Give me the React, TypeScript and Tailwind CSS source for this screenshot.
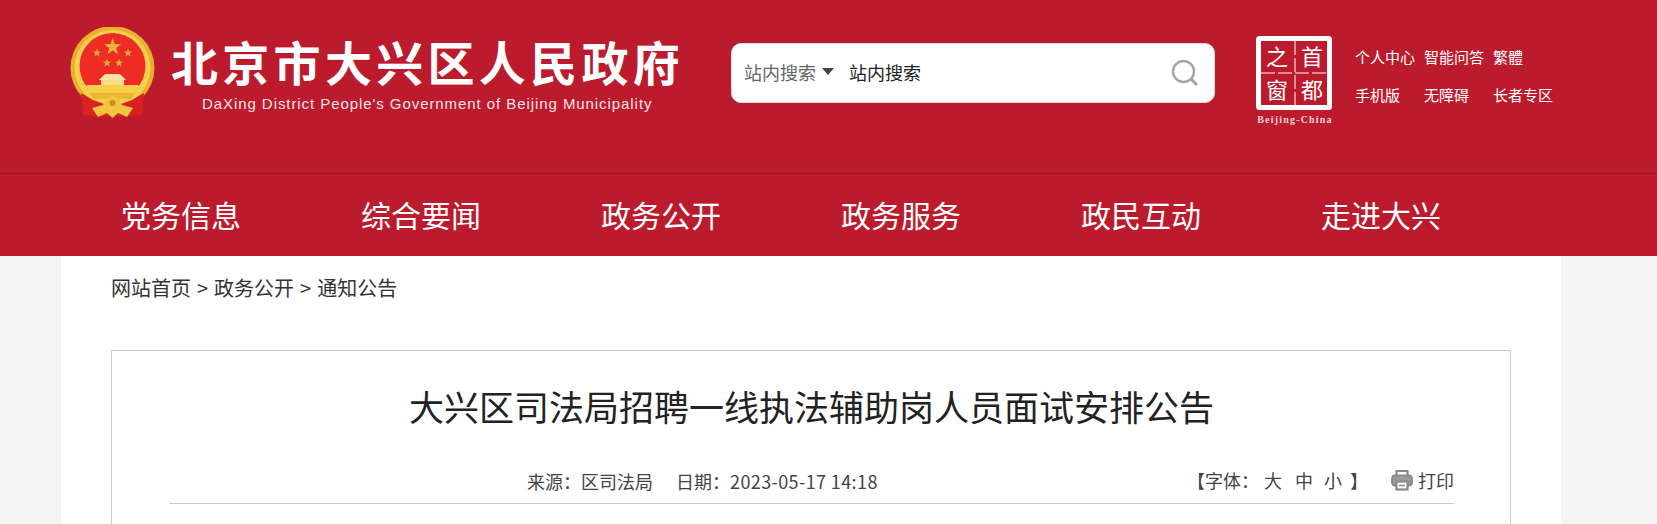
const cjk = "font-['Noto_Sans_CJK_SC','Liberation_Sans',sans-serif]"

const navItems = ['党务信息', '综合要闻', '政务公开', '政务服务', '政民互动', '走进大兴']

function Star({ x, y, r, fill = '#f6c93c' }: { x: number; y: number; r: number; fill?: string }) {
  const pts = Array.from({ length: 10 }, (_, i) => {
    const a = -Math.PI / 2 + (i * Math.PI) / 5
    const d = i % 2 === 0 ? r : r * 0.4
    return `${x + d * Math.cos(a)},${y + d * Math.sin(a)}`
  }).join(' ')
  return <polygon points={pts} fill={fill} />
}

function Emblem() {
  return (
    <svg width="85" height="92" viewBox="0 0 85 92" className="shrink-0">
      <circle cx="42.5" cy="41" r="42" fill="#e9b02a" />
      <circle cx="42.5" cy="41" r="38" fill="#f5cf50" />
      <circle cx="42.5" cy="39" r="33" fill="#ee2c25" />
      <Star x={42.7} y={20} r={9} fill="#e5b23a" />
      <Star x={27} y={26} r={4.5} fill="#dba935" />
      <Star x={58} y={26} r={4.5} fill="#dba935" />
      <Star x={37} y={36} r={4.5} fill="#dba935" />
      <Star x={49} y={36} r={4.5} fill="#dba935" />
      {/* gate */}
      <path d="M35 47 H50 L56 53 H29 Z" fill="#fbe3a8" />
      <rect x="31" y="53" width="23" height="5" fill="#f9dc85" />
      <path d="M17 58 H68 L71 66 H14 Z" fill="#f6d04a" />
      <path d="M19 66 H66 L61 72 H24 Z" fill="#eeb62c" />
      {/* ribbons */}
      <path d="M11 66 L23 73 L40 79 L38 90 L13 88 Z" fill="#db211e" />
      <path d="M74 66 L62 73 L45 79 L47 90 L72 88 Z" fill="#db211e" />
      <path d="M22 81 L33 78 L36 72 C39 68 46 68 49 72 L52 78 L63 81 L57 90 L48 86 L42.5 91 L37 86 L28 90 Z" fill="#f0c53f" />
      <circle cx="42.5" cy="76" r="3" fill="#cc8c20" />
    </svg>
  )
}

function CapitalLogo() {
  return (
    <svg width="84" height="92" viewBox="0 0 84 92" className="shrink-0">
      <rect x="2.5" y="2.5" width="71" height="69" rx="1" fill="none" stroke="#fff" strokeWidth="5" />
      <path d="M39 5 V70 M5 37 H72" stroke="#fff" strokeWidth="1" strokeDasharray="14 3" />
      <g fill="#fff" fontFamily="'Noto Sans CJK SC',serif" fontSize="22" textAnchor="middle">
        <text x="21" y="29">之</text>
        <text x="56" y="29">首</text>
        <text x="21" y="62">窗</text>
        <text x="56" y="62">都</text>
      </g>
      <text x="39" y="87" fill="#f1d3d6" fontFamily="'Liberation Serif',serif" fontSize="10" fontWeight="700" letterSpacing="1.2" textAnchor="middle">
        Beijing-China
      </text>
    </svg>
  )
}

export default function App() {
  return (
    <div className={`h-[524px] w-[1657px] overflow-hidden bg-[#f5f5f5] ${cjk}`}>
      {/* Header */}
      <header className="h-[174px] border-b border-[#9c1525] bg-[#bc1b2e]">
        <div className="ml-[61px] flex w-[1500px] pl-[9px]">
          <div className="mt-[27px]">
            <Emblem />
          </div>
          <div className="ml-[16px] w-[560px] pt-[30px] text-white">
            <div className="h-[62px] text-[47px] leading-[62px] font-bold tracking-[4.3px] whitespace-nowrap">北京市大兴区人民政府</div>
            <div className="mt-[2px] ml-[31px] font-['Liberation_Sans',sans-serif] text-[15px] leading-[20px] tracking-[0.93px] whitespace-nowrap text-[#f5e3e5]">
              DaXing District People's Government of Beijing Municipality
            </div>
          </div>
          <div className="mt-[43px] flex h-[60px] w-[484px] items-center rounded-[10px] border border-[#ddd] bg-white pr-[15px] pl-[12px] text-[18px]">
            <span className="mt-[-2px] text-[#666]">站内搜索</span>
            <span className="mt-[-3px] ml-[6px] h-0 w-0 border-x-[6.5px] border-t-[7px] border-x-transparent border-t-[#444]"></span>
            <span className="mt-[-2px] ml-[15px] text-[#222]">站内搜索</span>
            <svg width="28" height="28" viewBox="0 0 28 28" fill="none" stroke="#a5a5a5" strokeWidth="2.4" className="ml-auto">
              <circle cx="12.5" cy="12.5" r="10.5" />
              <path d="M20.5 20.5 L26 26" strokeWidth="3" />
            </svg>
          </div>
          <div className="mt-[36px] ml-[41px]">
            <CapitalLogo />
          </div>
          <div className="mt-[12px] ml-[15px] grid h-fit grid-cols-[69px_69px_auto] pt-[35px] text-[15px] leading-[20px] whitespace-nowrap text-white">
            <a>个人中心</a>
            <a>智能问答</a>
            <a>繁體</a>
            <a className="mt-[18px]">手机版</a>
            <a className="mt-[18px]">无障碍</a>
            <a className="mt-[18px]">长者专区</a>
          </div>
        </div>
      </header>

      {/* Nav */}
      <nav className="h-[82px] bg-[#bc1b2e]">
        <div className="ml-[61px] flex w-[1500px]">
          {navItems.map(item => (
            <a key={item} className="w-[240px] text-center text-[30px] leading-[80px] text-white">
              {item}
            </a>
          ))}
        </div>
      </nav>

      {/* Main */}
      <main className="ml-[61px] h-[268px] w-[1500px] bg-white px-[50px]">
        <div className="flex h-[94px] gap-[6px] pt-[17px] text-[20px] leading-[29px] text-[#333]">
          <span>网站首页</span>
          <span>&gt;</span>
          <span>政务公开</span>
          <span>&gt;</span>
          <span>通知公告</span>
        </div>
        <div className="h-[300px] border border-[#ccc] pr-[56px] pl-[57px]">
          <h1 className="pt-[27px] text-center text-[35px] leading-[56px] text-[#222]">
            大兴区司法局招聘一线执法辅助岗人员面试安排公告
          </h1>
          <div className="mt-[33px] flex h-[37px] items-start border-b border-[#ccc] text-[18px] leading-[26px] text-[#444]">
            <div className="ml-[358px] flex w-[660px] pt-[1px]">
              <span>来源：区司法局</span>
              <span className="ml-[23px]">
                日期：<span className="tracking-[0.4px]">2023-05-17 14:18</span>
              </span>
            </div>
            <div className="flex">
              <span>【字体：</span>
              <span className="ml-[5px]">大</span>
              <span className="ml-[13px]">中</span>
              <span className="ml-[11px]">小</span>
              <span className="ml-[8px]">】</span>
            </div>
            <div className="ml-auto flex items-center">
              <svg width="22" height="22" viewBox="0 0 22 22" className="mr-[5px]" fill="none" stroke="#8a8a8a" strokeWidth="2.2">
                <path d="M5.5 6 V2 H16.5 V6" />
                <rect x="1.2" y="6.5" width="19.6" height="10" rx="3" fill="#9a9a9a" />
                <rect x="5.5" y="12.5" width="11" height="8" fill="#fff" />
                <path d="M8 16.5 H14" strokeWidth="1.6" />
              </svg>
              <span>打印</span>
            </div>
          </div>
        </div>
      </main>
    </div>
  )
}
